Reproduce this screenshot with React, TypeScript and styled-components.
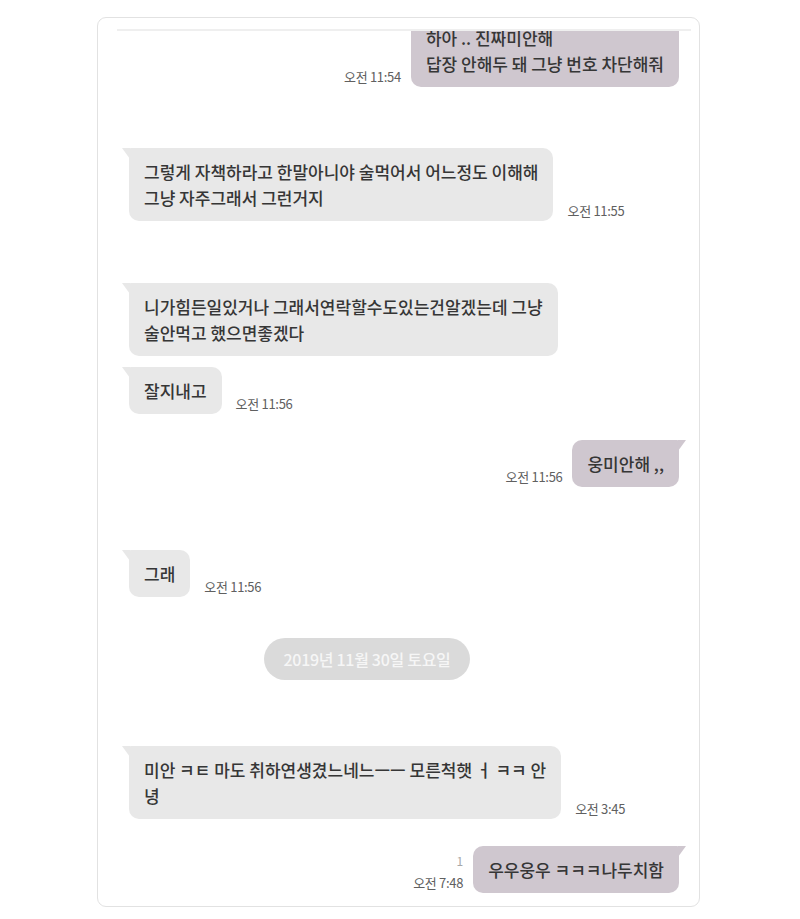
import React from "react";
import styled, { createGlobalStyle } from "styled-components";

const Global = createGlobalStyle`
  html, body { margin: 0; padding: 0; background: #ffffff; }
  body { font-family: "Noto Sans CJK KR", "Noto Sans", sans-serif; }
`;

const Page = styled.div`
  padding: 17px 0 0 97px;
  height: 919px;
  box-sizing: border-box;
`;

const Card = styled.div`
  width: 603px;
  height: 890px;
  box-sizing: border-box;
  border: 1px solid #e2e2e2;
  border-radius: 9px;
  background: #fff;
  padding: 11px 8px 0 19px;
`;

const Viewport = styled.div`
  border-top: 2px solid #efefef;
  height: 866px;
  overflow: hidden;
  padding: 0 12px;
  display: flex;
  flex-direction: column;
`;

const Row = styled.div<{ $side: "left" | "right"; $mt: number }>`
  display: flex;
  flex-direction: ${(p) => (p.$side === "left" ? "row" : "row-reverse")};
  align-items: flex-end;
  gap: ${(p) => (p.$side === "left" ? "14px" : "10px")};
  margin-top: ${(p) => p.$mt}px;
  flex-shrink: 0;
`;

const Bubble = styled.div<{ $side: "left" | "right" }>`
  position: relative;
  white-space: nowrap;
  font-size: 17px;
  line-height: 26px;
  font-weight: 500;
  color: #363636;
  padding: 11px 15px 10px;
  background: ${(p) => (p.$side === "left" ? "#e8e8e8" : "#cfc7cf")};
  border-radius: ${(p) => (p.$side === "left" ? "2px 10px 10px 10px" : "10px 2px 10px 10px")};
  &::before {
    content: "";
    position: absolute;
    top: 0;
    width: 8px;
    height: 11px;
    background: inherit;
    ${(p) =>
      p.$side === "left"
        ? "left: -7px; clip-path: polygon(0 0, 100% 0, 100% 100%);"
        : "right: -7px; clip-path: polygon(0 0, 100% 0, 0 100%);"}
  }
`;

const Meta = styled.div`
  display: flex;
  flex-direction: column;
  align-items: flex-end;
  margin-bottom: 2px;
`;

const Time = styled.span`
  font-size: 13px;
  line-height: 16px;
  color: #606060;
  white-space: nowrap;
  letter-spacing: -0.3px;
`;

const Unread = styled.span`
  font-size: 12px;
  line-height: 16px;
  color: #a8a8a8;
  margin-bottom: 6px;
`;

const DateRow = styled.div`
  display: flex;
  margin-top: 41px;
  padding-left: 135px;
  flex-shrink: 0;
`;

const DatePill = styled.div`
  width: 206px;
  height: 42px;
  border-radius: 21px;
  background: #dadada;
  color: #f6f6f6;
  font-size: 16px;
  font-weight: 500;
  display: flex;
  align-items: center;
  justify-content: center;
  letter-spacing: -0.3px;
`;

type Msg = {
  side: "left" | "right";
  mt: number;
  lines: string[];
  time?: string;
  unread?: string;
};

const before: Msg[] = [
  { side: "right", mt: -17, lines: ["하아 .. 진짜미안해", "답장 안해두 돼 그냥 번호 차단해줘"], time: "오전 11:54" },
  { side: "left", mt: 61, lines: ["그렇게 자책하라고 한말아니야 술먹어서 어느정도 이해해", "그냥 자주그래서 그런거지"], time: "오전 11:55" },
  { side: "left", mt: 62, lines: ["니가힘든일있거나 그래서연락할수도있는건알겠는데 그냥", "술안먹고 했으면좋겠다"] },
  { side: "left", mt: 11, lines: ["잘지내고"], time: "오전 11:56" },
  { side: "right", mt: 26, lines: ["웅미안해 ,,"], time: "오전 11:56" },
  { side: "left", mt: 63, lines: ["그래"], time: "오전 11:56" },
];

const after: Msg[] = [
  { side: "left", mt: 66, lines: ["미안 ㅋㅌ 마도 취하연생겼느네느ㅡㅡ 모른척햇 ㅓ ㅋㅋ 안", "녕"], time: "오전 3:45" },
  { side: "right", mt: 27, lines: ["우우웅우 ㅋㅋㅋ나두치함"], time: "오전 7:48", unread: "1" },
];

const Message: React.FC<{ m: Msg }> = ({ m }) => (
  <Row $side={m.side} $mt={m.mt}>
    <Bubble $side={m.side}>
      {m.lines.map((l, i) => (
        <React.Fragment key={i}>
          {i > 0 && <br />}
          {l}
        </React.Fragment>
      ))}
    </Bubble>
    {m.time && (
      <Meta>
        {m.unread && <Unread>{m.unread}</Unread>}
        <Time>{m.time}</Time>
      </Meta>
    )}
  </Row>
);

export default function App() {
  return (
    <>
      <Global />
      <Page>
        <Card>
          <Viewport>
            {before.map((m, i) => (
              <Message key={i} m={m} />
            ))}
            <DateRow>
              <DatePill>2019년 11월 30일 토요일</DatePill>
            </DateRow>
            {after.map((m, i) => (
              <Message key={i} m={m} />
            ))}
          </Viewport>
        </Card>
      </Page>
    </>
  );
}
